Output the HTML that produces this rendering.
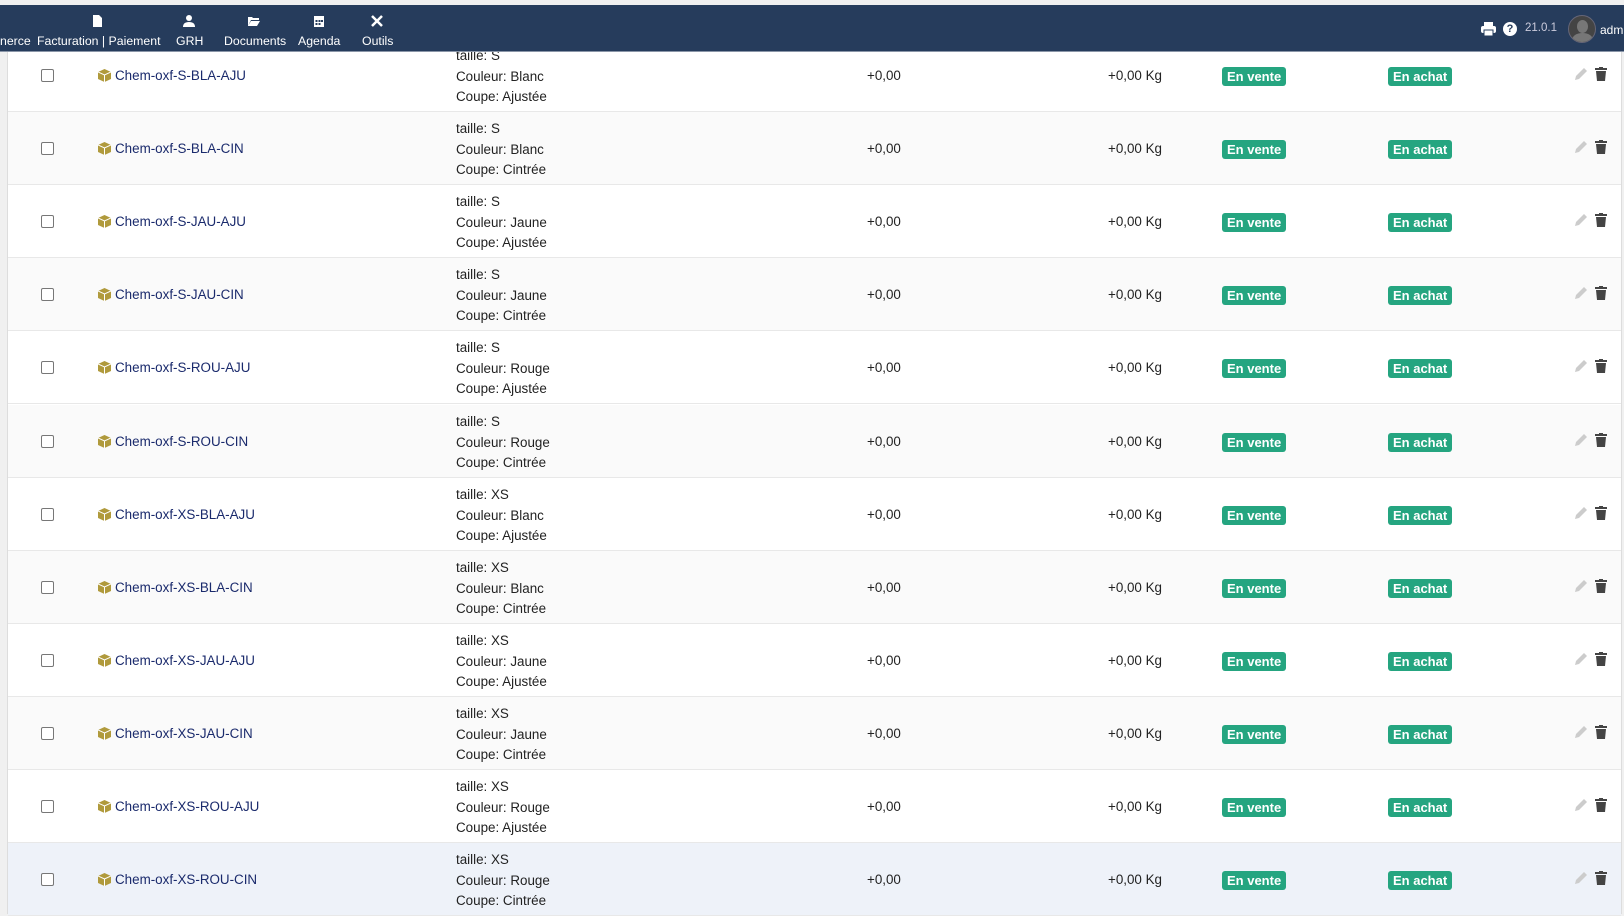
<!DOCTYPE html>
<html><head><meta charset="utf-8"><style>
*{margin:0;padding:0;box-sizing:border-box}
body{width:1624px;height:914px;overflow:hidden;background:#f0f0f0;font-family:"Liberation Sans",Arial,sans-serif;position:relative}
.page{position:absolute;left:7px;top:5px;width:1615px;height:909px;background:#fff;border-left:1px solid #ddd;border-right:1px solid #ddd}
.nav{position:absolute;left:0;top:5px;width:1624px;height:47px;background:#263c5c;border-bottom:1px solid #8a96a8;z-index:5;color:#fff}
.ni{position:absolute;top:0;height:47px;text-align:center;font-size:12.3px;color:#fff}
.ni .ic{position:absolute;top:10px;left:50%;transform:translateX(-50%);width:12px;height:12px}
.ni .lb{position:absolute;top:29px;left:0;white-space:nowrap}
.row{position:absolute;left:8px;width:1613px;height:73px;border-bottom:1px solid #e8e8e8;font-size:13.4px;color:#222}
.row.alt{background:#fafafa}
.row.last{background:#eef2f9}
.cb{position:absolute;left:33px;top:30px;width:13px;height:13px;border:1px solid #777;border-radius:2px;background:#fff}
.box{position:absolute;left:90px;top:30px}
.ref{position:absolute;left:107px;top:29px;color:#1a2a6c}
.attr{position:absolute;left:448px;top:7px;line-height:20.7px}
.pr{position:absolute;left:859px;top:29px}
.wt{position:absolute;left:1100px;top:29px}
.bd{position:absolute;top:28px;height:19px;line-height:19px;background:#25a580;color:#fff;font-weight:bold;font-size:13px;border-radius:3px;padding:0 5px}
.pen{position:absolute;left:1566px;top:28px}
.tr{position:absolute;left:1587px;top:28px}
</style></head><body>
<div class="page"></div>
<div class="nav">
 <div class="ni" style="left:-20px;width:50px"><div class="lb" style="left:20px">nerce</div></div>
 <div class="ni" style="left:37px;width:120px"><svg class="ic" viewBox="0 0 12 12"><path d="M2 0h6l3 3v9H2z" fill="#fff"/></svg><div class="lb">Facturation | Paiement</div></div>
 <div class="ni" style="left:176px;width:26px"><svg class="ic" viewBox="0 0 12 12"><circle cx="6" cy="3" r="3" fill="#fff"/><path d="M0 12q0-5 6-5t6 5z" fill="#fff"/></svg><div class="lb">GRH</div></div>
 <div class="ni" style="left:224px;width:60px"><svg class="ic" viewBox="0 0 12 12"><path d="M0 2h4l1 1h6v2H3L0 11z M3 6h9l-3 5H0z" fill="#fff"/></svg><div class="lb">Documents</div></div>
 <div class="ni" style="left:298px;width:42px"><svg class="ic" viewBox="0 0 12 12"><rect x="1" y="1" width="10" height="11" fill="#fff"/><g fill="#263c5c"><rect x="2.5" y="5" width="2" height="2"/><rect x="5.5" y="5" width="2" height="2"/><rect x="8" y="5" width="2" height="2"/><rect x="2.5" y="8" width="2" height="2"/><rect x="5.5" y="8" width="2" height="2"/></g></svg><div class="lb">Agenda</div></div>
 <div class="ni" style="left:362px;width:30px"><svg class="ic" viewBox="0 0 12 12"><path d="M1 1l10 10M11 1L1 11" stroke="#fff" stroke-width="2.5"/></svg><div class="lb">Outils</div></div>
 <svg style="position:absolute;left:1481px;top:17px" width="15" height="14" viewBox="0 0 15 14"><rect x="3" y="0" width="9" height="4" fill="#fff"/><rect x="0" y="4" width="15" height="7" rx="2" fill="#fff"/><rect x="3" y="8" width="9" height="6" fill="#fff" stroke="#263c5c"/></svg>
 <div style="position:absolute;left:1503px;top:17px;width:14px;height:14px;border-radius:50%;background:#fff;color:#263c5c;font-weight:bold;font-size:11px;text-align:center;line-height:14px">?</div>
 <div style="position:absolute;left:1525px;top:17px;font-size:11.5px;color:#ccd">21.0.1</div>
 <div style="position:absolute;left:1568px;top:10px;width:28px;height:28px;border-radius:50%;background:#444;border:1px solid #667;overflow:hidden"><div style="position:absolute;left:8px;top:4px;width:11px;height:13px;border-radius:50%;background:#777"></div><div style="position:absolute;left:3px;top:17px;width:21px;height:14px;border-radius:50% 50% 0 0;background:#777"></div></div>
 <div style="position:absolute;left:1600px;top:18px;font-size:12px">admi</div>
</div>
<div id="rows"></div>
<script>
var d=[["S","BLA","AJU","Blanc","Ajustée"],["S","BLA","CIN","Blanc","Cintrée"],["S","JAU","AJU","Jaune","Ajustée"],["S","JAU","CIN","Jaune","Cintrée"],["S","ROU","AJU","Rouge","Ajustée"],["S","ROU","CIN","Rouge","Cintrée"],["XS","BLA","AJU","Blanc","Ajustée"],["XS","BLA","CIN","Blanc","Cintrée"],["XS","JAU","AJU","Jaune","Ajustée"],["XS","JAU","CIN","Jaune","Cintrée"],["XS","ROU","AJU","Rouge","Ajustée"],["XS","ROU","CIN","Rouge","Cintrée"]];
var h="";
d.forEach(function(r,i){
var t=Math.round(39+i*73.1);
var c=i==11?"row last":(i%2?"row alt":"row");
h+='<div class="'+c+'" style="top:'+t+'px"><div class="cb"></div>'+
'<svg class="box" width="13" height="13" viewBox="0 0 13 13"><path d="M6.5 0L13 3v7l-6.5 3L0 10V3z" fill="#b09a3c"/><path d="M6.5 6v7M0 3l6.5 3L13 3" stroke="#fff" stroke-width="1" fill="none"/></svg>'+
'<div class="ref">Chem-oxf-'+r[0]+'-'+r[1]+'-'+r[2]+'</div>'+
'<div class="attr">taille: '+r[0]+'<br>Couleur: '+r[3]+'<br>Coupe: '+r[4]+'</div>'+
'<div class="pr">+0,00</div><div class="wt">+0,00 Kg</div>'+
'<div class="bd" style="left:1214px">En vente</div><div class="bd" style="left:1380px">En achat</div>'+
'<svg class="pen" width="14" height="14" viewBox="0 0 14 14"><path d="M1 13l1-4 8-8 3 3-8 8z" fill="#ccc"/></svg>'+
'<svg class="tr" width="12" height="14" viewBox="0 0 12 14"><rect x="0" y="1" width="12" height="2" fill="#444"/><rect x="4" y="0" width="4" height="2" fill="#444"/><path d="M1 4h10l-1 10H2z" fill="#444"/></svg></div>';
});
document.getElementById("rows").innerHTML=h;
</script>
</body></html>
